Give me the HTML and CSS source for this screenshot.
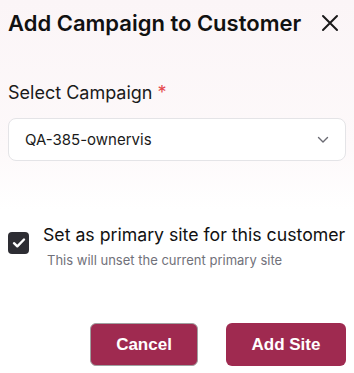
FILE: index.html
```html
<!DOCTYPE html>
<html>
<head>
<meta charset="utf-8">
<link rel="stylesheet" href="styles.css">
</head>
<body>
<div class="dialog">
  <div class="header">
    <h2 class="title">Add Campaign to Customer</h2>
    <button class="close" aria-label="Close">
      <svg width="18" height="18" viewBox="0 0 18 18"><path d="M2 2L16 16M16 2L2 16" stroke="#1a1a1a" stroke-width="2" stroke-linecap="round"/></svg>
    </button>
  </div>
  <div class="field">
    <label class="label">Select Campaign <span class="req">*</span></label>
    <div class="select">
      <span class="value">QA-385-ownervis</span>
      <svg width="12" height="8" viewBox="0 0 12 8"><path d="M1.5 1.5L6 6L10.5 1.5" fill="none" stroke="#6b6b73" stroke-width="1.4" stroke-linecap="round" stroke-linejoin="round"/></svg>
    </div>
  </div>
  <div class="check-row">
    <span class="checkbox">
      <svg width="14" height="12" viewBox="0 0 14 12"><path d="M2 6.2L5.3 9.3L12 2.5" fill="none" stroke="#fff" stroke-width="2.4" stroke-linecap="round" stroke-linejoin="round"/></svg>
    </span>
    <div class="check-text">
      <div class="check-label">Set as primary site for this customer</div>
      <div class="check-hint">This will unset the current primary site</div>
    </div>
  </div>
  <div class="actions">
    <button class="btn btn-cancel">Cancel</button>
    <button class="btn btn-primary">Add Site</button>
  </div>
</div>
</body>
</html>
```
FILE: styles.css
```css
html, body {
  margin: 0;
  padding: 0;
}
body {
  width: 354px;
  height: 373px;
  background: linear-gradient(to bottom, #fbf5f7 0px, #fdf9fa 150px, #ffffff 210px);
  font-family: Inter, "Noto Sans", sans-serif;
  color: #1a1a1a;
  overflow: hidden;
}
.dialog {
  padding: 0 8px 0 8px;
  display: flex;
  flex-direction: column;
}
.header {
  display: flex;
  justify-content: space-between;
  align-items: center;
  height: 45px;
}
.title {
  margin: 0;
  font-size: 22px;
  line-height: 28px;
  font-weight: 600;
  color: #111;
}
.close {
  border: none;
  background: none;
  padding: 0;
  margin-right: 7px;
  width: 18px;
  height: 18px;
  display: flex;
}
.field {
  margin-top: 37px;
}
.label {
  display: block;
  font-size: 18px;
  color: #1a1a1a;
  line-height: 22px;
}
.req {
  color: #e5484d;
}
.select {
  margin-top: 14px;
  height: 41px;
  border: 1px solid #e4e4e7;
  border-radius: 8px;
  background: #fff;
  display: flex;
  align-items: center;
  justify-content: space-between;
  padding: 0 16px 0 16px;
}
.value {
  font-size: 15px;
  color: #1a1a1a;
}
.check-row {
  margin-top: 63px;
  display: flex;
  align-items: flex-start;
  gap: 14px;
}
.checkbox {
  margin-top: 8px;
  width: 21px;
  height: 22px;
  border-radius: 4px;
  background: #2d2d33;
  display: flex;
  align-items: center;
  justify-content: center;
  flex: none;
}
.check-text {
  display: flex;
  flex-direction: column;
}
.check-label {
  font-size: 17.7px;
  line-height: 22px;
  color: #111;
  white-space: nowrap;
}
.check-hint {
  margin-top: 6px;
  margin-left: 4px;
  font-size: 13px;
  line-height: 16px;
  color: #71717a;
}
.actions {
  margin-top: 55px;
  display: flex;
  justify-content: flex-end;
  gap: 28px;
}
.btn {
  height: 43px;
  border-radius: 6px;
  background: #9f2a50;
  color: #fff;
  font-family: "Liberation Sans", Arial, sans-serif;
  font-weight: 700;
  font-size: 17px;
  border: none;
}
.btn-cancel {
  width: 108px;
  border: 1px solid #a0a0a0;
}
.btn-primary {
  width: 120px;
}
```
